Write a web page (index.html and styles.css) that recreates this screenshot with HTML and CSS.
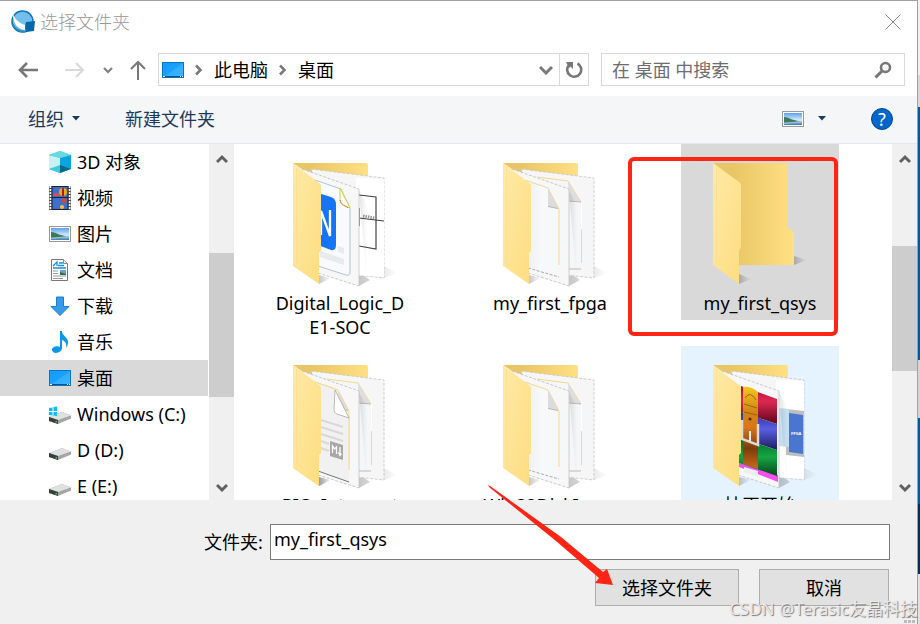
FILE: index.html
```html
<!DOCTYPE html>
<html lang="zh-CN">
<head>
    <meta charset="UTF-8">
    <meta name="viewport" content="width=device-width, initial-scale=1.0">
    <title>选择文件夹</title>
    <link rel="stylesheet" href="styles.css">
</head>
<body>

    <!-- Shared icons -->
    <svg class="defs" width="0" height="0" aria-hidden="true">
        <defs>
            <linearGradient id="g-flap" x1="0" y1="0" x2="1" y2="1">
                <stop offset="0" stop-color="#ffe9a6"/><stop offset="1" stop-color="#fddd80"/>
            </linearGradient>
            <linearGradient id="g-back" x1="0" y1="0" x2="1" y2="0">
                <stop offset=".25" stop-color="#e9c665"/><stop offset="1" stop-color="#ffe083"/>
            </linearGradient>
            <linearGradient id="g-screen" x1="0" y1="0" x2="1" y2="1">
                <stop offset="0" stop-color="#139bff"/><stop offset=".5" stop-color="#1aa0ff"/><stop offset=".52" stop-color="#33adff"/><stop offset="1" stop-color="#42b4ff"/>
            </linearGradient>
            <linearGradient id="g-shadow" x1="0" y1="0" x2="1" y2="0">
                <stop offset="0" stop-color="#000" stop-opacity=".22"/><stop offset="1" stop-color="#000" stop-opacity="0"/>
            </linearGradient>
            <linearGradient id="g-sky" x1="0" y1="0" x2="0" y2="1">
                <stop offset="0" stop-color="#5d9ff0"/><stop offset=".6" stop-color="#d5ecfb"/><stop offset="1" stop-color="#3c78b0"/>
            </linearGradient>
            <linearGradient id="g-sheet" x1="0" y1="0" x2="1" y2="0">
                <stop offset="0" stop-color="#eceef0"/><stop offset=".5" stop-color="#f8f9fa"/><stop offset="1" stop-color="#f6f7f9"/>
            </linearGradient>
            <linearGradient id="g-red" x1="0" y1="0" x2="0" y2="1">
                <stop offset="0" stop-color="#a80f35"/><stop offset=".4" stop-color="#dd2852"/><stop offset="1" stop-color="#5e0518"/>
            </linearGradient>
            <linearGradient id="g-blue" x1="0" y1="0" x2="0" y2="1">
                <stop offset="0" stop-color="#2c2c90"/><stop offset=".45" stop-color="#5a5ee4"/><stop offset="1" stop-color="#1b1b5c"/>
            </linearGradient>
            <linearGradient id="g-green" x1="0" y1="0" x2="0" y2="1">
                <stop offset="0" stop-color="#056a28"/><stop offset=".5" stop-color="#16a544"/><stop offset="1" stop-color="#03461a"/>
            </linearGradient>
            <linearGradient id="g-belt" x1="0" y1="0" x2="0" y2="1">
                <stop offset="0" stop-color="#f5c51c"/><stop offset=".3" stop-color="#cf8714"/><stop offset=".5" stop-color="#d9741a"/><stop offset=".75" stop-color="#7c3c0c"/><stop offset="1" stop-color="#cc6a1b"/>
            </linearGradient>
        </defs>

        <symbol id="i-screen" viewBox="0 0 22 16">
            <rect x=".5" y=".5" width="21" height="15" fill="url(#g-screen)" stroke="#0a74c4"/>
            <path d="M1 14.5h20" stroke="#0b4f88"/><path d="M1 14.5h2M18 14.5h1M20 14.5h1" stroke="#fff"/>
        </symbol>
        <symbol id="i-right" viewBox="0 0 10 12"><path d="M2 1.5L6.5 6 2 10.5" fill="none" stroke="#7a7a7a" stroke-width="2.6"/></symbol>
        <symbol id="i-up" viewBox="0 0 12 10"><path d="M1 8l5-5 5 5" fill="none" stroke="#606060" stroke-width="3"/></symbol>
        <symbol id="i-down" viewBox="0 0 12 10"><path d="M1 2l5 5 5-5" fill="none" stroke="#606060" stroke-width="3"/></symbol>
        <symbol id="i-caret" viewBox="0 0 8 5"><path d="M0 0h8L4 4.5z" fill="#1e395b"/></symbol>
        <symbol id="i-picture" viewBox="0 0 22 16">
            <rect x=".5" y=".5" width="21" height="15" fill="#fff" stroke="#999"/>
            <rect x="2" y="2" width="18" height="12" fill="url(#g-sky)"/>
            <path d="M2 6c3 0 5 1 8 2.500l8 2-9 1H2z" fill="#3d7a57"/>
            <path d="M2 12l8-1 10-1v1l-10 1-8 1z" fill="#9fc4dc"/>
        </symbol>
        <symbol id="i-drive" viewBox="0 0 22 14">
            <path d="M0 6l13-5 9 3.5v3L9 13 0 10z" fill="#a5a5a8"/>
            <path d="M0 6l13-5 9 3.5L9 9z" fill="#dfe0e2"/>
            <path d="M0 6l9 3v4l-9-3z" fill="#3c3c3c"/><path d="M6.5 10.5L8 11" stroke="#35d23e" stroke-width="1.5"/>
        </symbol>

        <!-- Folder parts -->
        <symbol id="f-flap" viewBox="0 0 128 128">
            <path d="M43 115l12 3-12 6z" fill="url(#g-shadow)"/>
            <path d="M17 3l26 20q2 1 2 3v65l-2 2v31L17 106z" fill="url(#g-flap)"/>
            <path d="M20.5 7v100" stroke="#f9dd92" stroke-width=".7"/>
        </symbol>
        <symbol id="f-pages" viewBox="0 0 128 128">
            <path d="M17 3h73q2 0 2 2v14H40z" fill="url(#g-back)"/>
            <path d="M108 106l14 7-14 5zM83 112l11 8-11 6z" fill="url(#g-shadow)"/>
            <path d="M35 9l73 9v100l-28-3z" fill="#f6f6f6" stroke="#c4c4c4" stroke-width=".8" stroke-dasharray="3 1.5"/>
        </symbol>
        <symbol id="f-sheet2" viewBox="0 0 128 128">
            <path d="M51 17l31 4 13 21v67H80z" fill="#f5f6f8"/>
            <path d="M51 17l31 4 13 21" fill="none" stroke="#f3d98d"/><path d="M95.5 69v34" stroke="#f3d98d"/>
            <path d="M95.5 42v27" stroke="#fff"/><path d="M82 21l13 21-12-1z" fill="#dedede"/>
            <path d="M83 41l12 1M83 109h12" stroke="#bbb"/>
            <path d="M83 31l8 13v80z" fill="url(#g-shadow)" opacity=".5"/>
        </symbol>
        <symbol id="f-page1" viewBox="0 0 128 128">
            <path d="M26 9l57 20v97l-41-13z" fill="#f7f7f7"/>
            <path d="M26 9l57 20M42 113l41 13" fill="none" stroke="#bdbdbd" stroke-width=".8" stroke-dasharray="3 1.5"/>
            <path d="M83 29v97" stroke="#c4c4c4" stroke-width=".8"/>
        </symbol>
        <symbol id="f-plain" viewBox="0 0 128 128">
            <use href="#f-pages"/><use href="#f-sheet2"/><use href="#f-page1"/>
            <path d="M39 20l23 8 11 21v68l-31-9z" fill="url(#g-sheet)"/>
            <path d="M39 20l23 8 11 21v56" fill="none" stroke="#f3d98d"/>
            <path d="M62 28l10.5 20.5L62 46.500z" fill="#dcdcdc"/><path d="M62 46.5l10 2" stroke="#aaa" stroke-width=".8"/>
            <path d="M42 108l31 9" stroke="#888" stroke-width=".7" stroke-dasharray="3 1.5"/>
            <use href="#f-flap"/>
        </symbol>
    </svg>

    <main class="dialog">
        <header class="titlebar">
            <svg class="app-icon" width="24" height="24" viewBox="0 0 24 24" aria-hidden="true">
                <circle cx="11.5" cy="11.5" r="10.5" fill="#72bfec" stroke="#1274b4" stroke-width="1.5"/>
                <path d="M2 4c2 5 6 9 12 11v5C7 19 2 14 2 4z" fill="#fff"/>
                <path d="M1.5 14c2 5 8 8 13 7.500" fill="none" stroke="#2789c6" stroke-width="2"/>
                <path d="M15 12l9-1-1 10-8 1-1-5z" fill="#0667a8"/>
            </svg>
            <h1>选择文件夹</h1>
            <button class="close" type="button" aria-label="关闭">
                <svg width="16" height="16" viewBox="0 0 16 16"><path d="M.5.5l15 15M15.5.5l-15 15" stroke="#888"/></svg>
            </button>
        </header>

        <nav class="navbar">
            <div class="history">
                <button type="button" aria-label="后退"><svg width="20" height="16" viewBox="0 0 20 16"><path d="M20 8H2M9 1L2 8l7 7" fill="none" stroke="#777" stroke-width="2.6"/></svg></button>
                <button type="button" aria-label="前进"><svg width="20" height="16" viewBox="0 0 20 16"><path d="M1 8h17M12 1l7 7-7 7" fill="none" stroke="#dadada" stroke-width="2.2"/></svg></button>
                <button type="button" aria-label="最近的位置"><svg width="10" height="8" viewBox="0 0 10 8"><path d="M1 2l4 4 4-4" fill="none" stroke="#808080" stroke-width="2.2"/></svg></button>
                <button type="button" aria-label="上移"><svg width="16" height="20" viewBox="0 0 16 20"><path d="M8 20V2M1 9l7-7 7 7" fill="none" stroke="#777" stroke-width="2"/></svg></button>
            </div>
            <div class="address">
                <svg width="22" height="16"><use href="#i-screen"/></svg>
                <svg width="10" height="12"><use href="#i-right"/></svg>
                <a href="#">此电脑</a>
                <svg width="10" height="12"><use href="#i-right"/></svg>
                <a href="#">桌面</a>
                <button class="drop" type="button" aria-label="以前的位置"><svg width="14" height="10" viewBox="0 0 14 10"><path d="M1 2l6 6 6-6" fill="none" stroke="#7a7a7a" stroke-width="3"/></svg></button>
                <button class="refresh" type="button" aria-label="刷新"><svg width="18" height="18" viewBox="0 0 18 18"><path d="M12.5 2.500A7 7 0 1 1 4 4" fill="none" stroke="#777" stroke-width="2.6"/><path d="M1 1h7v7L5.5 5.5 4 7z" fill="#777"/></svg></button>
            </div>
            <div class="search">
                <input type="text" placeholder="在 桌面 中搜索" aria-label="在 桌面 中搜索">
                <svg width="18" height="18" viewBox="0 0 18 18"><circle cx="11.5" cy="6.5" r="4.5" fill="none" stroke="#777" stroke-width="2.6"/><path d="M8 10l-6.5 6.500" stroke="#777" stroke-width="3"/></svg>
            </div>
        </nav>

        <div class="toolbar">
            <button type="button">组织 <svg width="8" height="5"><use href="#i-caret"/></svg></button>
            <button type="button">新建文件夹</button>
            <button class="view" type="button" aria-label="更改视图">
                <svg width="22" height="16"><use href="#i-picture"/></svg>
                <svg width="8" height="5"><use href="#i-caret"/></svg>
            </button>
            <button class="help" type="button" aria-label="帮助">?</button>
        </div>

        <div class="content">
            <ul class="tree">
                <li><svg width="22" height="22" viewBox="0 0 22 22"><path d="M0 4l11-4 11 4v14l-11 4-11-4z" fill="#39c4dc"/><path d="M0 4l11 3v9L0 18z" fill="#c9f1f2"/><path d="M22 4L11 7v9l11 2z" fill="#0ba4dd"/><path d="M0 4l11-4 11 4-11 3z" fill="#68d8e4"/><path d="M0 18l11-4v8z" fill="#3fcbd9"/><path d="M22 18l-11-4v8z" fill="#04698c"/></svg>3D 对象</li>
                <li><svg width="22" height="24" viewBox="0 0 22 24"><path d="M0 0h22v24H0z" fill="#555"/><path d="M1.5 0v24M20.5 0v24" stroke="#fff" stroke-width="2" stroke-dasharray="2 1"/><path d="M3 1h16v10H3zM3 12h16v11H3z" fill="#3d6ed0"/><path d="M4 9q4-5 7 1H4z" fill="#e14a5b"/><circle cx="14" cy="6" r="4" fill="#e8ad14"/><path d="M13 2h2v8h-2z" fill="#a81f21"/><path d="M12 14l3-2 3 2-2 3h-2z" fill="#e54124"/><circle cx="13" cy="21" r="2" fill="#f4c52c"/><path d="M3 0v24M19 0v24M3 .5h16M3 11.5h16M3 23.5h16" stroke="#222"/></svg>视频</li>
                <li><svg width="22" height="16"><use href="#i-picture"/></svg>图片</li>
                <li><svg width="22" height="22" viewBox="0 0 22 22"><path d="M2.5.5h12l4 4v17h-16z" fill="#fff" stroke="#777"/><path d="M14.5.5v4h4" fill="#eee" stroke="#888"/><path d="M4 7l4-4v4M10 4h4M9 6.500h6M4 9h13" fill="none" stroke="#168fda" stroke-width="1.3"/><path d="M4 12h5M4 14.500h5M4 17h13M4 19.500h10" stroke="#999"/><path d="M11 11h6v5h-6z" fill="#6ba0d4"/><path d="M11 13l3 1 3 1v1h-6z" fill="#356b51"/></svg>文档</li>
                <li><svg width="22" height="20" viewBox="0 0 22 20"><path d="M7.5 1h7v9.500h5.500L11 19.500 2 10.500h5.500z" fill="#379be9" stroke="#1780d0"/></svg>下载</li>
                <li><svg width="22" height="22" viewBox="0 0 22 22"><path d="M11 0h2c0 5 6 6 6 11 0 3-1 4-2 6 1-5-1-7-4-8v8c0 5-9 7-10 2-.5-3 5-5 8-3z" fill="#0c97ea"/></svg>音乐</li>
                <li class="selected"><svg width="22" height="16"><use href="#i-screen"/></svg>桌面</li>
                <li><svg width="22" height="22" viewBox="0 -4 22 22"><use href="#i-drive" y="4" width="22" height="14"/><path d="M0 1l3.500-.5V4H0zM4.500 0L8-.5V4H4.500zM0 5h3.500v3.500L0 8zM4.500 5H8v4l-3.500-.5z" fill="#08bff4"/></svg>Windows (C:)</li>
                <li><svg width="22" height="22" viewBox="0 -8 22 22"><use href="#i-drive" width="22" height="14"/></svg>D (D:)</li>
                <li><svg width="22" height="22" viewBox="0 -8 22 22"><use href="#i-drive" width="22" height="14"/></svg>E (E:)</li>
            </ul>
            <div class="scrollbar tree-scroll">
                <button type="button" aria-label="向上滚动"><svg width="12" height="10"><use href="#i-up"/></svg></button>
                <span class="thumb"></span>
                <button class="end" type="button" aria-label="向下滚动"><svg width="12" height="10"><use href="#i-down"/></svg></button>
            </div>

            <ul class="files">
                <li>
                    <svg viewBox="0 0 128 128" aria-hidden="true">
                        <use href="#f-pages"/>
                        <path d="M80 18l28 1v98l-28-2z" fill="#fff"/>
                        <path d="M83 35l17 2v52l-17-3M83 58l25 3" fill="none" stroke="#444" stroke-width="1.2"/>
                        <path d="M87 56l12 2" stroke="#999" stroke-width="3" stroke-dasharray="1.5 1"/>
                        <path d="M83 31l8 13v80z" fill="url(#g-shadow)" opacity=".5"/>
                        <use href="#f-page1"/>
                        <path d="M39 20l26 9 9 19v64q0 4-4 3l-28-9z" fill="#f8fafd" stroke="#9fb2c6" stroke-width=".8"/>
                        <path d="M64 28l10 20-7-3q-3-1-3-5z" fill="#fff" stroke="#d3cf34"/><path d="M64 40q1 5 9 8" fill="none" stroke="#ee4760" stroke-dasharray="1.5 1"/>
                        <path d="M42 33l13 4q5 2 5 7v41q0 6-5 5l-13-5z" fill="#1674fa"/>
                        <path d="M45 75V51l9 25V50" fill="none" stroke="#fff" stroke-width="2.3"/>
                        <path d="M44 91l24 8v6l-24-8zM62 86l6 2v6l-6-2z" fill="#e7eaee"/>
                        <path d="M83 48h1v18h-1z" fill="#999"/>
                        <use href="#f-flap"/>
                    </svg>
                    <span>Digital_Logic_DE1-SOC</span>
                </li>
                <li>
                    <svg aria-hidden="true"><use href="#f-plain"/></svg>
                    <span>my_first_fpga</span>
                </li>
                <li class="selected">
                    <svg viewBox="0 0 128 128" aria-hidden="true">
                        <path d="M98 96l13 4-13 5z" fill="url(#g-shadow)"/>
                        <path d="M17 3h72q2 0 2 2v61q0 2 3 3 4 2 4 5v29q0 2-2 2H40z" fill="url(#g-back)"/>
                        <path d="M43 114l12 5-12 5z" fill="url(#g-shadow)"/>
                        <path d="M17 3l26 19q2 1 2 3v62l-2 4v33L17 105z" fill="url(#g-flap)"/>
                        <path d="M20.5 7v98" stroke="#f9dd92" stroke-width=".7"/>
                    </svg>
                    <span>my_first_qsys</span>
                </li>
                <li>
                    <svg viewBox="0 0 128 128" aria-hidden="true">
                        <use href="#f-plain"/>
                        <path d="M39 20l20 7 14 29v64l-31-10z" fill="#f1f1f1"/>
                        <path d="M39 20l20 7 14 29v52" fill="none" stroke="#f3d98d"/>
                        <path d="M59 28l14 28-12-4q-3-1-3-4z" fill="#fff" stroke="#aaa" stroke-width=".8"/>
                        <path d="M45 58l22 7M45 65l22 7M45 72l22 7M45 79l8 3M45 86l8 3" stroke="#d9d9d9" stroke-width="2.2"/>
                        <path d="M54 79l13 4v15l-13-4z" fill="#a8a8a8"/>
                        <path d="M56.5 91v-7l2 3 2-2v7M64 85v7M62.5 90.5l1.5 3 1.5-2" fill="none" stroke="#fff" stroke-width="1.3"/>
                        <path d="M42 109l31 11" stroke="#777"/>
                        <use href="#f-flap"/>
                    </svg>
                    <span>PIO_Interrupt</span>
                </li>
                <li>
                    <svg aria-hidden="true"><use href="#f-plain"/></svg>
                    <span>Win32DiskImag</span>
                </li>
                <li class="hover">
                    <svg viewBox="0 0 128 128" aria-hidden="true">
                        <use href="#f-pages"/>
                        <path d="M80 18l28 1v98l-28-2z" fill="#fff"/>
                        <path d="M90 47l18 2v46l-18-2z" fill="#bcbec2"/><path d="M83 46l10 1v38l-10-1z" fill="#c5dff1"/>
                        <path d="M93 51l14 2v39l-14-2z" fill="#4a76cf"/>
                        <text class="chip" x="95" y="73">FPGA</text>
                        <path d="M83 31l8 13v80z" fill="url(#g-shadow)" opacity=".5"/>
                        <use href="#f-page1"/>
                        <path d="M43 101l39 12v7l-39-15z" fill="#f450ef"/>
                        <path d="M48 105l14 4v6l-14-5z" fill="#e9f0f2"/>
                        <path d="M45 24l36 13v25L45 50z" fill="url(#g-red)"/>
                        <path d="M45 50l36 12v26L45 76z" fill="url(#g-blue)"/>
                        <path d="M45 76l36 12v26l-38-13V90z" fill="url(#g-green)"/>
                        <path d="M47 25q8-1 15 5v77l-15-5z" fill="url(#g-belt)"/>
                        <path d="M49 36q5-8 11 2M48 42l13 4M48 50l13 3" fill="none" stroke="#8f5209" stroke-width=".8"/>
                        <path d="M46 58v19l16 6V62" fill="none" stroke="#dadada" stroke-width="2.5"/>
                        <path d="M54 69v10" stroke="#eee" stroke-width="2"/><circle cx="54" cy="57" r="1.5" fill="#54250a"/>
                        <use href="#f-flap"/>
                    </svg>
                    <span>扶正开始</span>
                </li>
            </ul>
            <div class="scrollbar files-scroll">
                <button type="button" aria-label="向上滚动"><svg width="12" height="10"><use href="#i-up"/></svg></button>
                <span class="thumb"></span>
                <button class="end" type="button" aria-label="向下滚动"><svg width="12" height="10"><use href="#i-down"/></svg></button>
            </div>
        </div>

        <form class="footer">
            <div class="field">
                <label for="folder">文件夹:</label>
                <input type="text" id="folder" value="my_first_qsys">
            </div>
            <div class="actions">
                <button class="choose" type="button">选择文件夹</button>
                <button class="cancel" type="button">取消</button>
            </div>
        </form>

        <!-- Annotations over the dialog -->
        <div class="mark-box"></div>
        <svg class="mark-arrow" width="126" height="100" viewBox="0 0 126 100" aria-hidden="true">
            <path d="M0 0l2 1 71 51 42 35 4-3 6 16-18-2 4-5-43-37L1 2z" fill="#ff2414"/>
        </svg>
        <svg class="grip" width="14" height="14" viewBox="0 0 14 14" aria-hidden="true"><path d="M9 0h3v3H9zM5 5h3v3H5zM9 5h3v3H9zM1 10h3v3H1zM5 10h3v3H5zM9 10h3v3H9z" fill="#bcbcbc"/></svg>
        <div class="watermark">CSDN @Terasic友晶科技</div>
    </main>

</body>
</html>
```
FILE: styles.css
```css
* {
    box-sizing: border-box;
}
body {
    margin: 0;
    height: 100vh;
    padding-right: 2px;
    overflow: hidden;
    font-family: "Noto Sans", "Noto Sans CJK SC", sans-serif;
    font-size: 18px;
    line-height: 24px;
    color: #000;
    /* windows behind the dialog, seen on the right edge */
    background: linear-gradient(#f0f0f0 0 75px, #d8d8d8 75px 107px, #005a9e 107px 360px, #d5d5d5 360px 418px, #005a9e 418px 504px, #06305a 504px 574px, #e0e0e0 574px);
}
button, input {
    font: inherit;
    color: inherit;
}
button {
    padding: 0;
    border: none;
    background: none;
}
svg {
    display: block;
    flex: none;
}
ul {
    margin: 0;
    padding: 0;
    list-style: none;
}
.defs {
    position: absolute;
}
.dialog {
    position: relative;
    display: flex;
    flex-direction: column;
    height: 100%;
    border-top: 1px solid #a0a0a0;
    border-right: 1px solid #a0a0a0;
    background: #fff;
}

/* Title bar */
.titlebar {
    display: flex;
    align-items: center;
    height: 42px;
    padding: 0 16px 0 11px;
}
.titlebar h1 {
    flex: 1;
    margin: 0 0 0 5px;
    font-size: 18px;
    font-weight: 300;
    color: #999;
}

/* Navigation */
.navbar {
    display: flex;
    align-items: center;
    height: 53px;
    padding: 0 12px 0 18px;
}
.history {
    display: flex;
    align-items: center;
    width: 140px;
    gap: 19px;
}
.history button:first-child {
    margin-right: 7px;
}
.history button:last-child {
    margin-left: -2px;
}
.address, .search {
    display: flex;
    align-items: center;
    height: 33px;
    border: 1px solid #d9d9d9;
}
.address {
    flex: 426 1 0;
    gap: 10px;
    padding-left: 3px;
}
.address a {
    color: #000;
    text-decoration: none;
}
.drop {
    margin-left: auto;
    margin-right: -4px;
}
.refresh {
    display: grid;
    place-items: center;
    align-self: stretch;
    width: 29px;
    border-left: 1px solid #d9d9d9;
}
.search {
    flex: 280 1 0;
    margin-left: 12px;
    padding: 0 12px 0 10px;
}
.search input {
    flex: 1;
    min-width: 0;
    padding: 0;
    border: none;
    outline: none;
}
.search input::placeholder {
    color: #6d6d6d;
    opacity: 1;
}

/* Toolbar */
.toolbar {
    display: flex;
    align-items: center;
    height: 48px;
    padding: 0 24px 2px 28px;
    gap: 45px;
    border-bottom: 1px solid #e6e8eb;
    background: #f4f6f8;
    color: #1e395b;
}
.toolbar button {
    display: flex;
    align-items: center;
    gap: 8px;
}
.toolbar .view {
    gap: 14px;
    margin-left: auto;
}
.toolbar .help {
    justify-content: center;
    width: 22px;
    height: 22px;
    border: 1px solid #00478f;
    border-radius: 50%;
    background: #0066cc;
    color: #fff;
}

/* Tree and file list */
.content {
    display: flex;
    flex: 1;
    min-height: 0;
    overflow: hidden;
}
.tree {
    width: 208px;
    margin-right: 1px;
}
.tree li {
    display: flex;
    align-items: center;
    height: 36px;
    padding-left: 49px;
    gap: 6px;
}
.tree .selected, .files .selected {
    background: #d9d9d9;
}
.scrollbar {
    display: grid;
    width: 25px;
    background: #f0f0f0;
}
.tree-scroll {
    grid-template-rows: 30px 79fr 144fr 79fr 24px;
    margin-right: 2px;
}
.files-scroll {
    grid-template-rows: 30px 72fr 125fr 105fr 24px;
}
.scrollbar button {
    display: grid;
    place-items: center;
}
.scrollbar .thumb {
    grid-row: 3;
    background: #cdcdcd;
}
.scrollbar .end {
    grid-row: 5;
}
.files {
    flex: 1;
    display: grid;
    grid-template-columns: repeat(auto-fill, 158px);
    align-content: start;
    align-items: start;
    gap: 2px 52px;
    padding-left: 25px;
}
.files li {
    padding: 16px 10px 5px;
    text-align: center;
    word-break: break-all;
}
.files svg {
    width: 128px;
    height: 128px;
    margin: 0 auto 3px;
}
.files span {
    display: block;
}
.files .hover {
    background: #e5f3ff;
}
.chip {
    font-size: 4px;
    font-weight: bold;
    fill: #fff;
}

/* Footer */
.footer {
    height: 124px;
    padding: 24px 27px 0 204px;
    background: #f0f0f0;
}
.field {
    display: flex;
    align-items: center;
}
.field label {
    width: 66px;
}
.field input {
    flex: 1;
    height: 36px;
    padding: 0 3px 6px;
    border: 1px solid #7a7a7a;
    background: #fff;
}
.actions {
    display: flex;
    justify-content: flex-end;
    gap: 20px;
    margin-top: 9px;
    padding-right: 1px;
}
.actions button {
    height: 37px;
    border: 1px solid #adadad;
    background: #e1e1e1;
}
.choose {
    width: 144px;
}
.cancel {
    width: 130px;
}

/* Annotations */
.mark-box {
    position: absolute;
    top: 156px;
    left: 628px;
    width: 210px;
    height: 179px;
    border: 4px solid #ff2414;
    border-radius: 6px;
}
.mark-arrow {
    position: absolute;
    top: 484px;
    left: 488px;
}
.grip {
    position: absolute;
    right: 0;
    bottom: 0;
}
.watermark {
    position: absolute;
    right: 0;
    bottom: 3px;
    font-size: 17px;
    color: #e8e8e8;
    text-shadow: 1px 1px 1px #777;
    white-space: nowrap;
}
```
